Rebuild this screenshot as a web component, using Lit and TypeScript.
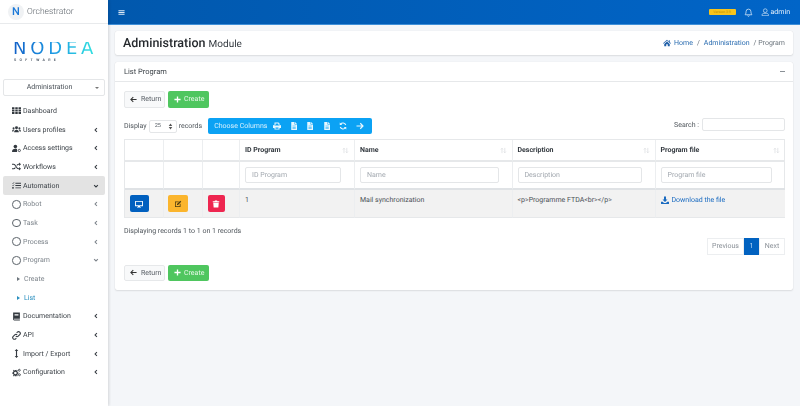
import { LitElement, html, css, svg } from "lit";
import { customElement } from "lit/decorators.js";

const I: Record<string, any> = {
  th: svg`<path d="M0 2h4.400v3.400H0zM5.800 2h4.400v3.400H5.800zM11.600 2H16v3.400h-4.400zM0 6.400h4.400v3.400H0zM5.800 6.400h4.400v3.400H5.800zM11.600 6.400H16v3.400h-4.400zM0 10.800h4.400v3.400H0zM5.800 10.800h4.400v3.400H5.800zM11.600 10.800H16v3.400h-4.400z"/>`,
  users: svg`<circle cx="8" cy="5" r="2.600"/><circle cx="2.800" cy="6" r="1.800"/><circle cx="13.200" cy="6" r="1.800"/><path d="M3.800 13c0-3 1.600-4.600 4.200-4.600s4.200 1.600 4.200 4.600zM0 11.500c0-2 1-3.200 2.800-3.200.5 0 1 .1 1.300.3-1 .9-1.500 2-1.600 2.900zM16 11.500c0-2-1-3.200-2.800-3.200-.5 0-1 .1-1.300.3 1 .9 1.500 2 1.600 2.900z"/>`,
  access: svg`<circle cx="6" cy="4.600" r="3.200"/><path d="M0 14c0-3.600 2-5.400 6-5.400 1.200 0 2.200.2 3 .5V14z"/><circle cx="13" cy="11.500" r="2" fill="none" stroke="currentColor" stroke-width="1.500"/>`,
  random: svg`<path d="M0 4h3c3.600 0 4.600 8 8.400 8H13M0 12h3c1.300 0 2.200-1 3-2.400M8.600 6.400C9.300 5 10.200 4 11.400 4H13" fill="none" stroke="currentColor" stroke-width="1.800"/><path d="M12.600 1 16 4l-3.400 3zM12.600 9 16 12l-3.400 3z"/>`,
  tasks: svg`<path d="M6 3h10v1.700H6zM6 7.200h10v1.700H6zM6 11.400h10v1.700H6zM0 11.200h3.400v2H0z"/><path d="M.6 3.600 1.800 4.800 3.800 2M.6 7.800l1.200 1.200 2-2.800" fill="none" stroke="currentColor" stroke-width="1.100"/>`,
  book: svg`<path d="M2 1h12v11H4.200c-1 0-1 1.400 0 1.400H14V15H4c-1.200 0-2-.8-2-2zM4.500 3.500v1.300h7V3.500zM4.500 6v1.300h7V6z" fill-rule="evenodd"/>`,
  link: svg`<path d="M6.800 9.200a3 3 0 0 0 4.300 0l2.700-2.700a3 3 0 0 0-4.300-4.300L8.300 3.400M9.200 6.800a3 3 0 0 0-4.300 0L2.200 9.500a3 3 0 0 0 4.300 4.300l1.200-1.200" fill="none" stroke="currentColor" stroke-width="1.900"/>`,
  updown: svg`<path d="M8 0l3.200 3.600H9V12.400h2.200L8 16l-3.200-3.600H7V3.600H4.800z"/>`,
  cogs: svg`<circle cx="6" cy="9" r="3.400" fill="none" stroke="currentColor" stroke-width="2.200"/><path d="M5 3.500h2v2H5zM5 12.500h2v2H5zM.5 8h2v2h-2zM9.500 8h2v2h-2zM1.800 4.500l1.400-1.400 1.400 1.400-1.400 1.400zM7.400 4.500l1.400-1.400 1.400 1.400-1.400 1.400zM1.800 13.500l1.400-1.400 1.400 1.400-1.400 1.400zM7.400 13.500l1.400-1.400 1.400 1.400-1.400 1.400z"/><circle cx="13" cy="4" r="1.700" fill="none" stroke="currentColor" stroke-width="1.500"/><circle cx="13.200" cy="12" r="1.700" fill="none" stroke="currentColor" stroke-width="1.500"/>`,
  left: svg`<path d="M10.500 3 5.500 8l5 5" fill="none" stroke="currentColor" stroke-width="2.800"/>`,
  down: svg`<path d="M3 5.500l5 5 5-5" fill="none" stroke="currentColor" stroke-width="2.800"/>`,
  arrowL: svg`<path d="M7.500 2.500 2 8l5.500 5.500M2.500 8H15" fill="none" stroke="currentColor" stroke-width="2.400"/>`,
  arrowR: svg`<path d="M8.500 2.500 14 8l-5.500 5.500M13.500 8H1" fill="none" stroke="currentColor" stroke-width="2.400"/>`,
  plus: svg`<path d="M6.500 1h3v5.500H15v3H9.500V15h-3V9.500H1v-3h5.500z"/>`,
  print: svg`<path d="M3 1h8l2 2v4H3zM5 3v3h6V4l-1-1zM0 7.500C0 6.700.7 6 1.500 6h13c.8 0 1.500.7 1.500 1.500V12h-3v3H3v-3H0zM5 11v2.500h6V11z" fill-rule="evenodd"/>`,
  file: svg`<path d="M2.500 0H9v5h5v11H2.500zM10.200 0 14 3.800h-3.800zM5 7.500h6.500v1H5zM5 10h6.500v1H5zM5 12.500h6.500v1H5z" fill-rule="evenodd"/>`,
  sync: svg`<path d="M13.500 6A6 6 0 0 0 3 4.500M2.500 10A6 6 0 0 0 13 11.500" fill="none" stroke="currentColor" stroke-width="2.200"/><path d="M1.500 1v5h5zM14.500 15v-5h-5z"/>`,
  monitor: svg`<path d="M1 2h14a1 1 0 0 1 1 1v8.500a1 1 0 0 1-1 1H10l.5 1.500H12v1H4v-1h1.500l.5-1.500H1a1 1 0 0 1-1-1V3a1 1 0 0 1 1-1zM1.800 3.500v7h12.400v-7z" fill-rule="evenodd"/>`,
  edit: svg`<path d="M2 3h8L8.500 4.500h-5v8h8V8.500L13 7v7H2z"/><path d="M6 8.200 12.500 1.700l2 2L8 10.200H6z"/>`,
  trash: svg`<path d="M1.500 2.500H5L6 1h4l1 1.500h3.500V4.500h-13zM2.500 5.500h11l-.8 9.500H3.300z"/>`,
  home: svg`<path d="M8 1.500 0 8.300l.9 1L8 3.500l7.100 5.800.9-1-2.500-2.100V2.500h-2v3z"/><path d="M2.500 9.800 8 5.200l5.500 4.600V14.500H9.500V10.500h-3v4H2.500z"/>`,
  download: svg`<path d="M6 1h4v6h3L8 12 3 7h3z"/><path d="M0 11.500h3.500L6 14h4l2.500-2.500H16V16H0z"/>`,
  bell: svg`<path d="M8 2a4.300 4.300 0 0 0-4.300 4.300c0 4-1.700 5.200-1.700 5.700h12c0-.5-1.700-1.700-1.700-5.700A4.300 4.300 0 0 0 8 2zM6.300 13.500a1.800 1.800 0 0 0 3.400 0" fill="none" stroke="currentColor" stroke-width="1.300"/>`,
  user: svg`<circle cx="8" cy="5" r="3.500" fill="none" stroke="currentColor" stroke-width="1.200"/><path d="M2 14.500v-1.200c0-2 1.500-3.300 3.300-3.300h5.400c1.800 0 3.300 1.300 3.300 3.300v1.200z" fill="none" stroke="currentColor" stroke-width="1.200"/>`,
  sort: svg`<path d="M4.500 14V3M2 5.500l2.500-2.500L7 5.500M11 2v11M8.500 10.500 11 13l2.500-2.500" fill="none" stroke="currentColor" stroke-width="1.300"/>`,
  bars: svg`<path d="M1 3h14v2H1zM1 7h14v2H1zM1 11h14v2H1z"/>`,
};
const icon = (n: string, cls = "") =>
  html`<svg class="ic ${cls}" viewBox="0 0 16 16" fill="currentColor" aria-hidden="true">${I[n]}</svg>`;

type Item = { t: string; i?: string; kind?: "sub" | "leaf"; arrow?: "l" | "d"; cls?: string };
const MENU: Item[] = [
  { t: "Dashboard", i: "th" },
  { t: "Users profiles", i: "users", arrow: "l" },
  { t: "Access settings", i: "access", arrow: "l" },
  { t: "Workflows", i: "random", arrow: "l" },
  { t: "Automation", i: "tasks", arrow: "d", cls: "open" },
  { t: "Robot", kind: "sub", arrow: "l" },
  { t: "Task", kind: "sub", arrow: "l" },
  { t: "Process", kind: "sub", arrow: "l" },
  { t: "Program", kind: "sub", arrow: "d" },
  { t: "Create", kind: "leaf" },
  { t: "List", kind: "leaf", cls: "cur" },
  { t: "Documentation", i: "book", arrow: "l" },
  { t: "API", i: "link", arrow: "l" },
  { t: "Import / Export", i: "updown", arrow: "l" },
  { t: "Configuration", i: "cogs", arrow: "l" },
];

@customElement("app-root")
export class AppRoot extends LitElement {
  static styles = css`
    :host { display: block; width: 800px; height: 406px; overflow: hidden; font-family: Roboto, "Liberation Sans", sans-serif; font-size: 7px; color: #3d4349; background: #f4f6f9; text-rendering: geometricPrecision; }
    * { box-sizing: border-box; }
    .ic { width: 8px; height: 8px; display: block; flex: none; }
    .app { display: flex; height: 406px; opacity: .999; }
    .side { width: 108px; flex: none; background: #fff; box-shadow: 1px 0 3px rgba(0,0,0,.14); position: relative; z-index: 2; }
    .brand { height: 24px; display: flex; align-items: center; gap: 3px; padding-left: 8px; border-bottom: 1px solid #e8eaec; font-size: 8.500px; font-weight: 300; color: #5f666d; }
    .brandmark { width: 16px; height: 16px; border-radius: 50%; background: #f0f2f4; display: flex; align-items: center; justify-content: center; font-size: 11px; font-weight: 500; color: #1a78d8; }
    .logo { height: 54px; display: flex; flex-direction: column; align-items: flex-start; padding: 17.500px 0 0 13px; }
    .nodea { font-family: "DejaVu Sans", sans-serif; font-size: 18px; line-height: 14px; letter-spacing: 3.800px; font-weight: 400; background: linear-gradient(90deg, #1260c8, #1d9be4 50%, #2fdbe0 92%); -webkit-background-clip: text; background-clip: text; color: transparent; }
    .soft { font-size: 3.600px; line-height: 5px; letter-spacing: 3.300px; color: #5a6470; font-weight: 700; margin: 2.500px 0 0 1px; }
    .selwrap { padding: 1px 3px 0 3px; height: 20px; }
    .sel { height: 16.500px; border: 1px solid #e4e6e8; border-radius: 2px; display: flex; align-items: center; justify-content: center; padding-right: 9px; position: relative; color: #495057; }
    .sel::after { content: ""; position: absolute; right: 5px; top: 7px; border: 2px solid transparent; border-top: 2.500px solid #777; border-bottom: 0; }
    .menu { display: flex; flex-direction: column; padding: 0 3px; margin-top: 3.500px; }
    .mi { height: 18.700px; display: flex; align-items: center; padding-left: 9px; gap: 2px; color: #3d4349; border-radius: 2px; }
    .mi .ic { width: 9px; height: 9px; color: #343a40; }
    .mi .lbl { flex: 1; }
    .mi .ar { width: 6px; height: 6px; margin-right: 6px; color: #343a40; }
    .mi.open { background: #e3e3e3; }
    .mi.sub, .mi.leaf { color: #7d848b; }
    .mi.sub .ar { color: #7d848b; }
    .circ { width: 8.500px; height: 8.500px; border: .8px solid #5c636a; border-radius: 50%; flex: none; margin-right: .5px; }
    .mi.leaf { padding-left: 14px; gap: 4px; }
    .tri { width: 0; height: 0; border: 2px solid transparent; border-left: 3px solid #6c757d; border-right: 0; flex: none; }
    .mi.cur { color: #2a8fbf; }
    .mi.cur .tri { border-left-color: #2a8fbf; }
    .main { flex: 1; min-width: 0; display: flex; flex-direction: column; }
    .top { height: 25px; flex: none; background: linear-gradient(90deg, #0058ad, #0065c8); border-bottom: 1px solid #3f8fd8; display: flex; align-items: center; padding: 0 10px 0 10px; color: #e5f0fb; }
    .top .bars { width: 7px; height: 7px; color: #dfeaf6; }
    .top .sp { flex: 1; }
    .badge { width: 27px; height: 6px; background: #f7c41c; color: #c08d00; font-size: 3.500px; text-align: center; line-height: 6px; border-radius: 1px; margin-right: 8px; }
    .top .bell { width: 9px; height: 9px; margin-right: 8px; }
    .top .usr { width: 8.500px; height: 8.500px; margin-right: 1.500px; }
    .content { padding: 6px 7px 0; display: flex; flex-direction: column; gap: 7px; }
    .card { background: #fff; border-radius: 2px; box-shadow: 0 0 1px rgba(0,0,0,.16), 0 1px 2px rgba(0,0,0,.1); }
    .head { height: 24px; display: flex; align-items: center; justify-content: space-between; padding: 0 8px; }
    .h1 { font-size: 12.500px; font-weight: 500; color: #262a2e; }
    .h1 span { font-size: 10px; font-weight: 400; color: #343a40; }
    .crumb { display: flex; align-items: center; color: #6c757d; gap: 4px; }
    .crumb b { font-weight: 400; color: #2a6cb0; display: flex; align-items: center; gap: 3px; }
    .crumb .ic { color: #1f5fa8; width: 8px; height: 8px; }
    .box { height: 228px; display: flex; flex-direction: column; }
    .boxh { height: 20px; flex: none; border-bottom: 1px solid #e6e8ea; display: flex; align-items: center; justify-content: space-between; padding: 0 8px 0 9px; color: #3d4349; font-size: 7.500px; }
    .min { width: 5px; height: 1px; background: #8a9096; }
    .boxb { padding: 9px 8px 0 9px; }
    .btns { display: flex; gap: 3.500px; }
    .btn { height: 16.500px; display: inline-flex; align-items: center; border-radius: 2px; }
    .ret { width: 40.500px; background: #f8f9fa; border: 1px solid #e6e8ea; color: #555b62; padding-left: 5px; gap: 4px; }
    .ret .ic { width: 7px; height: 7px; color: #333; }
    .cre { width: 41px; background: #4fc65f; color: #e9f9ea; padding-left: 6px; gap: 3px; }
    .cre .ic { width: 7px; height: 7px; color: #fff; }
    .tools { display: flex; align-items: center; margin-top: 10.500px; height: 16px; }
    .disp { display: flex; align-items: center; gap: 2px; color: #50565c; }
    .len { width: 28px; height: 13px; border: 1px solid #e4e6e8; border-radius: 2px; display: flex; align-items: center; justify-content: space-between; padding: 0 3px 0 5px; font-size: 5.600px; color: #5a6168; }
    .len svg { width: 5px; height: 7px; }
    .bar { margin-left: 6px; height: 16px; background: #0ba2f4; border-radius: 2px; display: flex; align-items: center; color: #d7f0fd; padding-left: 6px; width: 164px; }
    .bar .cc { width: 62.500px; }
    .bar .ic { width: 8px; height: 8px; margin-right: 8.500px; color: #e9f7fe; }
    .srch { margin-left: auto; display: flex; align-items: center; gap: 3px; color: #50565c; margin-top: -3px; }
    .srch i { display: block; width: 83px; height: 13px; border: 1px solid #e4e6e8; border-radius: 2px; }
    .tbl { display: grid; grid-template-columns: 38.500px 39.500px 37px 115px 157.500px 143px 129px; margin-top: 5px; width: 661px; border-top: 1px solid #e6e8ea; border-right: 1px solid #e6e8ea; border-left: 1px solid #e6e8ea; }
    .c { border-right: 1px solid #eceef0; display: flex; align-items: center; padding: 0 13px 0 5px; min-width: 0; }
    .c:nth-child(7n) { border-right: 0; }
    .th { height: 22px; border-bottom: 2px solid #e6e8ea; font-weight: 700; color: #343a40; justify-content: space-between; padding: 0 5px; }
    .th .ic { width: 7px; height: 7px; color: #cfd3d7; }
    .fl { height: 28px; border-bottom: 2px solid #dfe2e5; }
    .fl div { width: 100%; height: 16.500px; border: 1px solid #e4e6e8; border-radius: 2px; color: #a2a8af; display: flex; align-items: center; padding-left: 6px; }
    .td { height: 28px; background: #f2f2f2; border-bottom: 1px solid #e6e8ea; align-items: flex-start; padding-top: 6px; color: #4a5056; }
    .act { align-items: center; padding-top: 0; padding-left: 4.500px; }
    .ab { height: 17px; border-radius: 2px; display: flex; align-items: center; justify-content: center; color: #fff; flex: none; }
    .ab .ic { width: 8px; height: 8px; }
    .ab.blue { width: 19.500px; background: #0060bf; }
    .ab.amber { width: 19.500px; background: #fbb52d; color: #4a3a10; }
    .ab.red { width: 17px; background: #ee2650; }
    .dl { color: #1a6bc0; display: flex; align-items: center; gap: 3px; }
    .info { margin-top: 9px; color: #50565c; line-height: 9px; }
    .pg { display: flex; justify-content: flex-end; height: 16.500px; margin-top: 2px; color: #8a9097; }
    .pg span { display: flex; align-items: center; justify-content: center; border: 1px solid #eceef0; }
    .pg .prev { width: 37px; }
    .pg .next { width: 26px; }
    .pg .cur { background: #0062c0; color: #b9d8f5; border-color: #0062c0; width: 15px; }
    .btns.bot { margin-top: 10px; }
  `;

  private renderItem(m: Item) {
    return html`<div class="mi ${m.kind ?? ""} ${m.cls ?? ""}">
      ${m.kind === "sub" ? html`<span class="circ"></span>` : m.kind === "leaf" ? html`<span class="tri"></span>` : icon(m.i!)}
      <span class="lbl">${m.t}</span>
      ${m.arrow ? icon(m.arrow === "l" ? "left" : "down", "ar") : ""}
    </div>`;
  }

  render() {
    const buttons = (cls = "") => html`<div class="btns ${cls}">
      <span class="btn ret">${icon("arrowL")}Return</span>
      <span class="btn cre">${icon("plus")}Create</span>
    </div>`;
    const heads = ["ID Program", "Name", "Description", "Program file"];
    return html`<div class="app">
      <aside class="side">
        <div class="brand"><span class="brandmark">N</span>Orchestrator</div>
        <div class="logo"><div class="nodea">NODEA</div><div class="soft">SOFTWARE</div></div>
        <div class="selwrap"><div class="sel">Administration</div></div>
        <nav class="menu">${MENU.map((m) => this.renderItem(m))}</nav>
      </aside>
      <div class="main">
        <header class="top">
          ${icon("bars", "bars")}<span class="sp"></span>
          <span class="badge">Version 3.9</span>${icon("bell", "bell")}${icon("user", "usr")}<span>admin</span>
        </header>
        <div class="content">
          <div class="card head">
            <div class="h1">Administration <span>Module</span></div>
            <div class="crumb"><b>${icon("home")}Home</b> / <b>Administration</b> / Program</div>
          </div>
          <div class="card box">
            <div class="boxh">List Program<span class="min"></span></div>
            <div class="boxb">
              ${buttons()}
              <div class="tools">
                <div class="disp">Display <span class="len">25 <svg viewBox="0 0 8 12" fill="#555"><path d="M4 1 7 5H1zM4 11 1 7h6z"/></svg></span> records</div>
                <div class="bar"><span class="cc">Choose Columns</span>${["print", "file", "file", "file", "sync", "arrowR"].map((n) => icon(n))}</div>
                <div class="srch">Search : <i></i></div>
              </div>
              <div class="tbl">
                <div class="c th"></div><div class="c th"></div><div class="c th"></div>
                ${heads.map((h) => html`<div class="c th">${h}${icon("sort")}</div>`)}
                <div class="c fl"></div><div class="c fl"></div><div class="c fl"></div>
                ${heads.map((h) => html`<div class="c fl"><div>${h}</div></div>`)}
                <div class="c td act"><span class="ab blue">${icon("monitor")}</span></div>
                <div class="c td act"><span class="ab amber">${icon("edit")}</span></div>
                <div class="c td act"><span class="ab red">${icon("trash")}</span></div>
                <div class="c td">1</div>
                <div class="c td">Mail synchronization</div>
                <div class="c td">&lt;p&gt;Programme FTDA&lt;br&gt;&lt;/p&gt;</div>
                <div class="c td"><span class="dl">${icon("download")}Download the file</span></div>
              </div>
              <div class="info">Displaying records 1 to 1 on 1 records</div>
              <div class="pg"><span class="prev">Previous</span><span class="cur">1</span><span class="next">Next</span></div>
              ${buttons("bot")}
            </div>
          </div>
        </div>
      </div>
    </div>`;
  }
}
